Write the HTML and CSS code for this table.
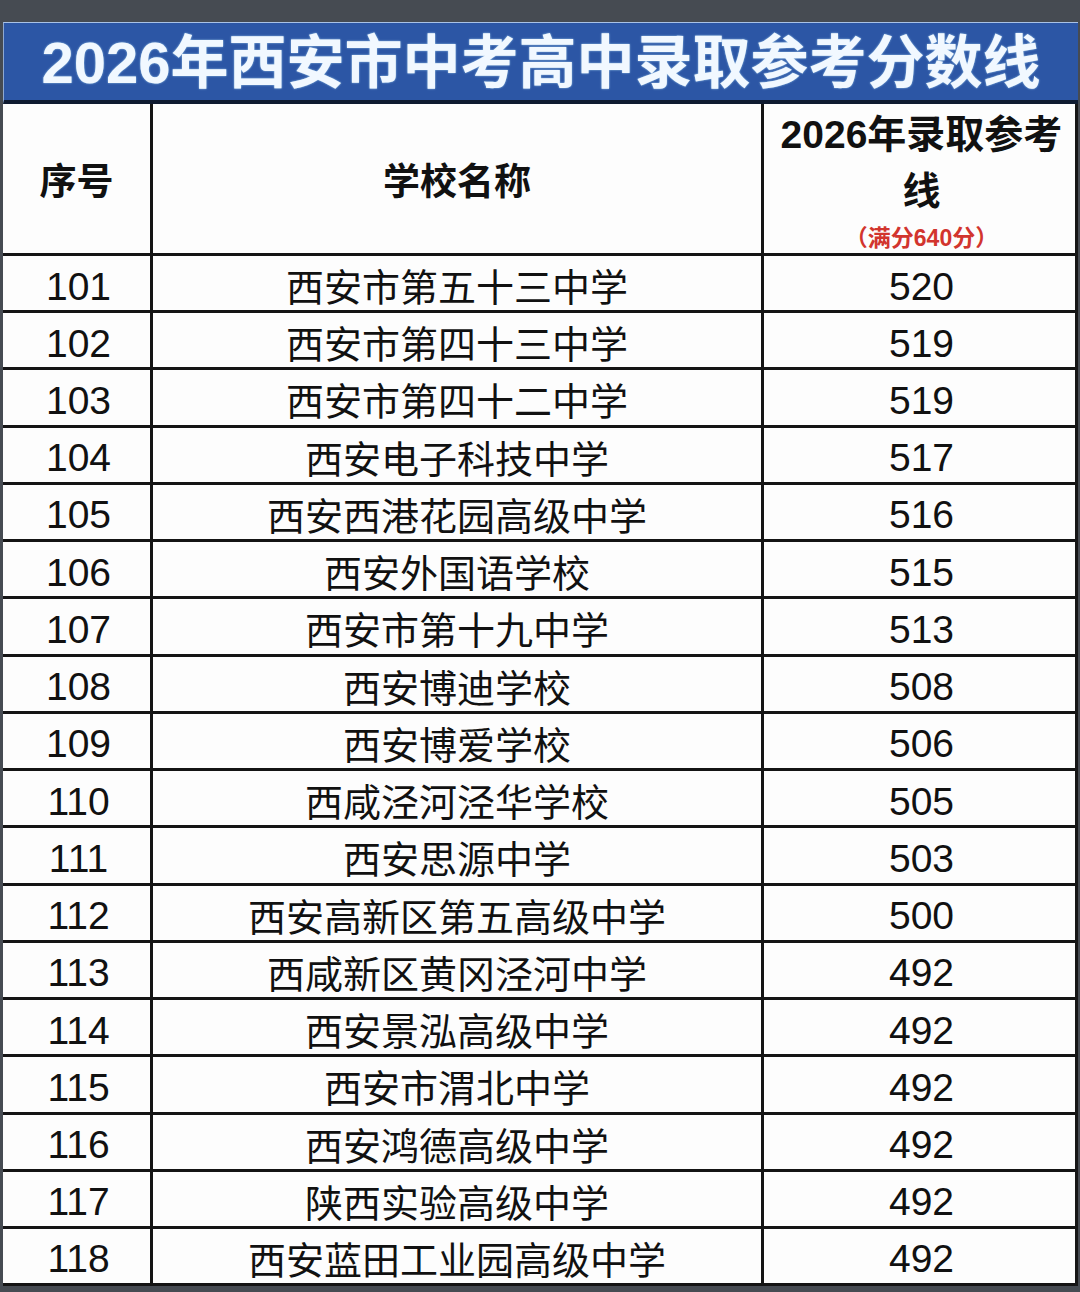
FILE: index.html
```html
<!DOCTYPE html>
<html lang="zh-CN">
<head>
<meta charset="utf-8">
<title>2026年西安市中考高中录取参考分数线</title>
<link rel="stylesheet" href="styles.css">
</head>
<body>
<div class="sheet">
  <div class="title">2026年西安市中考高中录取参考分数线</div>
  <div class="table">
    <div class="row head">
      <div class="cell">序号</div>
      <div class="cell">学校名称</div>
      <div class="cell score-head">
        <span class="l1">2026年录取参考</span>
        <span class="l2">线</span>
        <span class="note">（满分640分）</span>
      </div>
    </div>
    <div class="row"><div class="cell num">101</div><div class="cell name">西安市第五十三中学</div><div class="cell num">520</div></div>
    <div class="row"><div class="cell num">102</div><div class="cell name">西安市第四十三中学</div><div class="cell num">519</div></div>
    <div class="row"><div class="cell num">103</div><div class="cell name">西安市第四十二中学</div><div class="cell num">519</div></div>
    <div class="row"><div class="cell num">104</div><div class="cell name">西安电子科技中学</div><div class="cell num">517</div></div>
    <div class="row"><div class="cell num">105</div><div class="cell name">西安西港花园高级中学</div><div class="cell num">516</div></div>
    <div class="row"><div class="cell num">106</div><div class="cell name">西安外国语学校</div><div class="cell num">515</div></div>
    <div class="row"><div class="cell num">107</div><div class="cell name">西安市第十九中学</div><div class="cell num">513</div></div>
    <div class="row"><div class="cell num">108</div><div class="cell name">西安博迪学校</div><div class="cell num">508</div></div>
    <div class="row"><div class="cell num">109</div><div class="cell name">西安博爱学校</div><div class="cell num">506</div></div>
    <div class="row"><div class="cell num">110</div><div class="cell name">西咸泾河泾华学校</div><div class="cell num">505</div></div>
    <div class="row"><div class="cell num">111</div><div class="cell name">西安思源中学</div><div class="cell num">503</div></div>
    <div class="row"><div class="cell num">112</div><div class="cell name">西安高新区第五高级中学</div><div class="cell num">500</div></div>
    <div class="row"><div class="cell num">113</div><div class="cell name">西咸新区黄冈泾河中学</div><div class="cell num">492</div></div>
    <div class="row"><div class="cell num">114</div><div class="cell name">西安景泓高级中学</div><div class="cell num">492</div></div>
    <div class="row"><div class="cell num">115</div><div class="cell name">西安市渭北中学</div><div class="cell num">492</div></div>
    <div class="row"><div class="cell num">116</div><div class="cell name">西安鸿德高级中学</div><div class="cell num">492</div></div>
    <div class="row"><div class="cell num">117</div><div class="cell name">陕西实验高级中学</div><div class="cell num">492</div></div>
    <div class="row"><div class="cell num">118</div><div class="cell name">西安蓝田工业园高级中学</div><div class="cell num">492</div></div>
  </div>
</div>
</body>
</html>
```

FILE: styles.css
```css
html, body {
  margin: 0;
  padding: 0;
  background: #464b52;
}
body {
  width: 1080px;
  height: 1292px;
  overflow: hidden;
  font-family: "Liberation Sans", "Noto Sans CJK SC", sans-serif;
  color: #111;
}
.sheet {
  padding-top: 22px;
  padding-left: 3px;
  width: 1075px;
}
.title {
  box-sizing: border-box;
  height: 82px;
  border-top: 1px solid #a9c2e6;
  border-bottom: 4px solid #0e1a30;
  border-left: 1px solid #8fa9d0;
  background: #2c56a5;
  color: #f1f8ff;
  font-family: "Liberation Sans", "Noto Sans CJK SC", sans-serif;
  font-weight: 700;
  font-size: 58px;
  line-height: 80px;
  text-align: center;
  white-space: nowrap;
  text-shadow: 0 0 2px #a8d4f0;
}
.table {
  background: #fdfdfd;
  border-right: 3px solid #161616;
}
.row {
  display: grid;
  grid-template-columns: 150px 611px 1fr;
  height: 57.24px;
  box-sizing: border-box;
  border-bottom: 3px solid #141414;
}
.row.head {
  height: 152px;
}
.cell {
  display: flex;
  align-items: center;
  justify-content: center;
  font-size: 38px;
  box-sizing: border-box;
  white-space: nowrap;
}
.cell:nth-child(1),
.cell:nth-child(2) {
  border-right: 3px solid #141414;
}
.num {
  font-size: 39px;
  padding-top: 5px;
  padding-left: 4px;
}
.name {
  padding-top: 1px;
}
.head .cell {
  font-weight: 700;
  font-size: 37px;
  padding-top: 0;
}
.head .score-head {
  flex-direction: column;
  justify-content: flex-start;
  font-size: 38px;
  padding-left: 4px;
}
.score-head .l1,
.score-head .l2 {
  display: block;
  line-height: 57px;
}
.score-head .l1 {
  margin-top: 2px;
  font-size: 39px;
}
.score-head .note {
  display: block;
  color: #d2352e;
  font-size: 23px;
  line-height: 30px;
  margin-top: 3px;
}
```
